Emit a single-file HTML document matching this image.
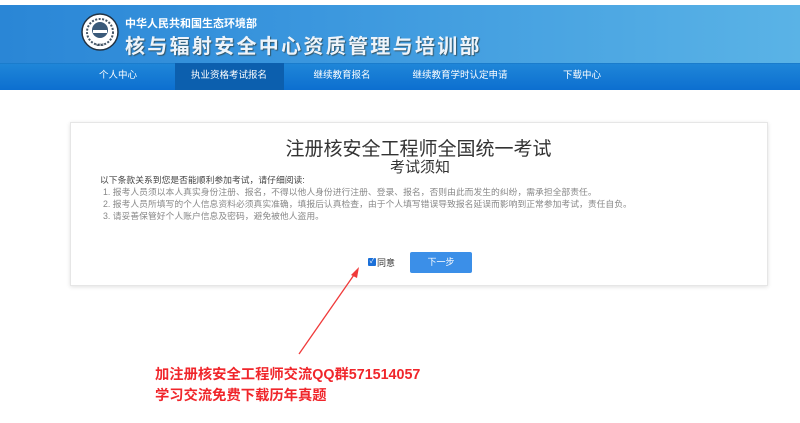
<!DOCTYPE html>
<html><head><meta charset="utf-8"><style>
*{margin:0;padding:0;box-sizing:border-box}
body{width:800px;height:423px;background:#fff;position:relative;overflow:hidden;font-family:"Liberation Sans","Noto Sans CJK SC",sans-serif}
.top{position:absolute;left:0;top:0;width:800px;height:5px;background:#fff}
.banner{position:absolute;left:0;top:5px;width:800px;height:58px;background:linear-gradient(90deg,#2a86d6 0%,#3b97de 40%,#5ab3e6 100%)}
.nav{position:absolute;left:0;top:63px;width:800px;height:27px;background:linear-gradient(#1f86d8,#0c6fd0);border-top:1px solid #1a7ccc}
.nav span{position:absolute;top:0;height:27px;line-height:26px;font-size:9.5px;color:#fff;transform:translateX(-50%);white-space:nowrap}
.act{position:absolute;left:175px;top:63px;width:109px;height:27px;background:#0c5fae}
.t1{position:absolute;left:125px;top:15px;font-size:11px;font-weight:bold;color:#fff}
.t2{position:absolute;left:125px;top:30px;font-size:20px;font-weight:bold;color:#eef4fa;letter-spacing:2.3px;text-shadow:1px 1px 1px #356}
.card{position:absolute;left:70px;top:122px;width:698px;height:164px;border:1px solid #e6e6e6;box-shadow:0 1px 4px rgba(0,0,0,.12);background:#fff}
.h1{position:absolute;left:0;width:800px;text-align:center;top:134px;font-size:19px;color:#333;padding-left:37px}
.h2{position:absolute;left:0;width:800px;text-align:center;top:156px;font-size:15px;color:#333;padding-left:40px}
.p{position:absolute;left:100px;font-size:8.8px;color:#444;white-space:nowrap}
.g{color:#888;left:103px}
.btn{position:absolute;left:410px;top:252px;width:62px;height:21px;background:#3b8fe8;border-radius:2px;color:#fff;font-size:9px;text-align:center;line-height:21px}
.red{position:absolute;left:155px;font-size:14.3px;font-weight:bold;color:#f0262b;white-space:nowrap}
</style></head><body>
<div class="top"></div>
<div class="banner"></div>
<svg style="position:absolute;left:81px;top:13px" width="38" height="38" viewBox="0 0 38 38">
<circle cx="19" cy="19" r="18" fill="#fff" stroke="#234" stroke-width="1.5"/>
<circle cx="19" cy="19" r="13" fill="none" stroke="#456" stroke-width="2" stroke-dasharray="2 1.5"/>
<circle cx="19" cy="17" r="8" fill="#3a5a7a"/>
<rect x="12" y="17" width="14" height="3" fill="#fff"/>
<text x="19" y="33" font-size="4" text-anchor="middle" fill="#234" font-family="Liberation Sans">MEE</text>
</svg>
<div class="t1">中华人民共和国生态环境部</div>
<div class="t2">核与辐射安全中心资质管理与培训部</div>
<div class="nav"></div>
<div class="act"></div>
<div class="nav" style="background:none;border:none">
<span style="left:118px">个人中心</span>
<span style="left:229px">执业资格考试报名</span>
<span style="left:342px">继续教育报名</span>
<span style="left:460px">继续教育学时认定申请</span>
<span style="left:582px">下载中心</span>
</div>
<div class="card"></div>
<div class="h1">注册核安全工程师全国统一考试</div>
<div class="h2">考试须知</div>
<div class="p" style="top:173px">以下条款关系到您是否能顺利参加考试，请仔细阅读:</div>
<div class="p g" style="top:185px">1. 报考人员须以本人真实身份注册、报名，不得以他人身份进行注册、登录、报名，否则由此而发生的纠纷，需承担全部责任。</div>
<div class="p g" style="top:197px">2. 报考人员所填写的个人信息资料必须真实准确，填报后认真检查，由于个人填写错误导致报名延误而影响到正常参加考试，责任自负。</div>
<div class="p g" style="top:209px">3. 请妥善保管好个人账户信息及密码，避免被他人盗用。</div>
<div style="position:absolute;left:368px;top:258px;width:8px;height:8px;background:#1a6fd8;border-radius:1px;color:#fff;font-size:7px;line-height:8px;text-align:center">✓</div>
<div class="p" style="left:377px;top:256px;font-size:9px;color:#333">同意</div>
<div class="btn">下一步</div>
<svg style="position:absolute;left:0;top:0" width="800" height="423"><line x1="299" y1="354" x2="356" y2="272" stroke="#f03a3a" stroke-width="1.3"/><polygon points="359,267 351,275 357,278" fill="#f03a3a"/></svg>
<div class="red" style="top:363px">加注册核安全工程师交流QQ群571514057</div>
<div class="red" style="top:384px">学习交流免费下载历年真题</div>
</body></html>
